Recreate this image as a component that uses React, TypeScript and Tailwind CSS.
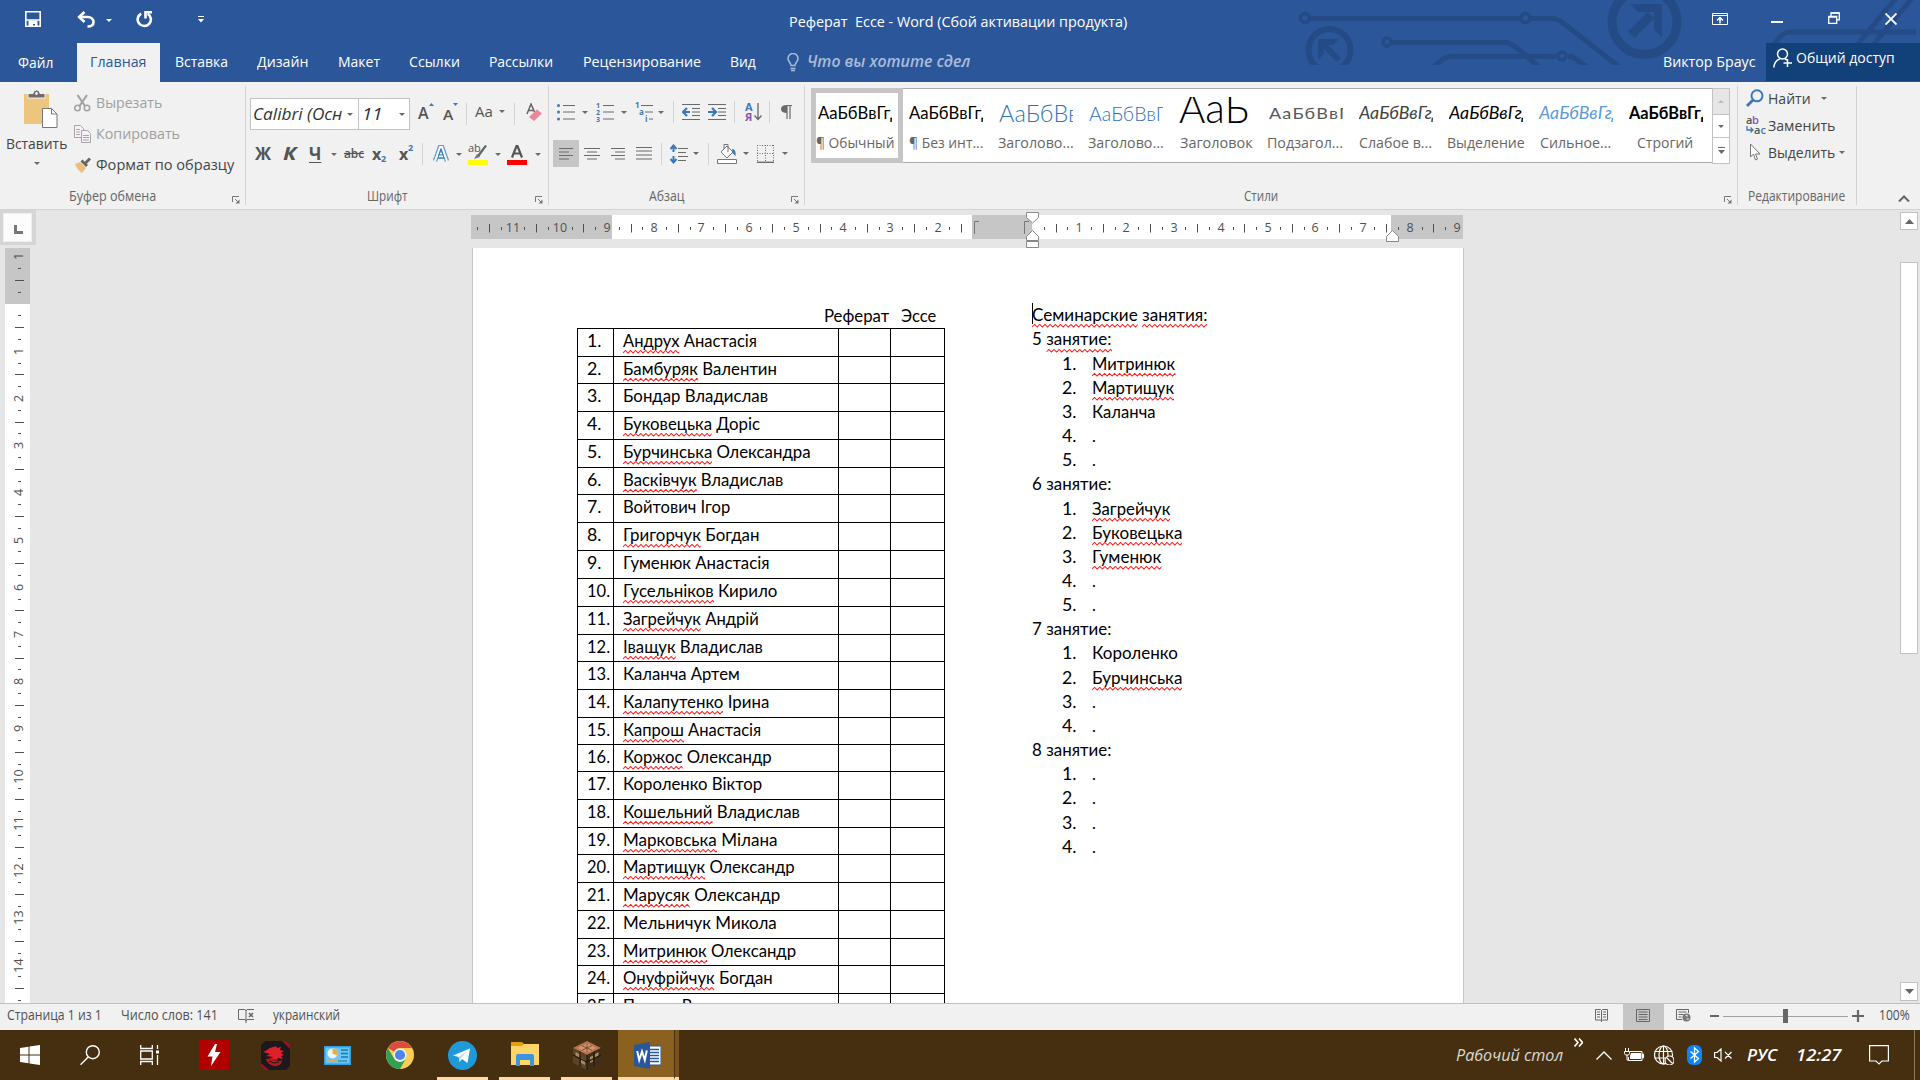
import React, { useLayoutEffect, useRef } from 'react';

/* Text condensed or widened to the width of its box. */
function T({ c = '', w, children }: { c?: string; w?: number; children: React.ReactNode }) {
  const outer = useRef<HTMLSpanElement>(null);
  const inner = useRef<HTMLSpanElement>(null);
  useLayoutEffect(() => {
    const o = outer.current!;
    const i = inner.current!;
    i.style.transform = `scaleX(${o.getBoundingClientRect().width / i.offsetWidth})`;
  }, []);
  return (
    <span ref={outer} className={`block shrink-0 whitespace-pre ${c}`} style={w ? { width: w } : undefined}>
      <span ref={inner} className="inline-block origin-left align-top">{children}</span>
    </span>
  );
}

const zig = 'M0 3' + Array.from({ length: 60 }, (_, i) => `l2.5 ${i % 2 ? 2.6 : -2.6}`).join('');
const Wavy = ({ children }: { children: React.ReactNode }) => (
  <span className="relative inline-block">
    {children}
    <svg className="absolute left-0 bottom-[-1px] h-[4px] w-full overflow-hidden" fill="none" stroke="#ff2020" strokeWidth="1">
      <path d={zig} />
    </svg>
  </span>
);

const Caret = ({ c = '' }: { c?: string }) => (
  <svg className={`h-[3px] w-[6px] shrink-0 ${c}`} viewBox="0 0 6 3"><path d="M0 0h6L3 3z" fill="#6a6a6a" /></svg>
);
const Sep = ({ c = '' }: { c?: string }) => <div className={`h-[22px] w-px shrink-0 bg-[#d2d2d2] ${c}`} />;
const GroupSep = () => <div className="mt-1 h-[119px] w-px shrink-0 bg-[#d2d2d2]" />;
const Launcher = ({ c = '' }: { c?: string }) => (
  <svg className={`h-[8px] w-[8px] shrink-0 ${c}`} viewBox="0 0 8 8" fill="none" stroke="#777">
    <path d="M.5 6V.5H7M3 3l3 3" /><path d="M7.5 3.5v4h-4z" fill="#777" stroke="none" />
  </svg>
);
const label = 'text-[14px] leading-[26px] text-[#666]';

function Header() {
  return (
    <header className="relative h-[82px] bg-[#2b579a] text-[15px] text-white">
      <svg className="absolute left-[1290px] top-0 h-[65px] w-[630px]" viewBox="1290 0 630 65" fill="none" stroke="#244b86" strokeWidth="5">
        <circle cx="1305" cy="18" r="4.5" strokeWidth="3.5" /><path d="M1311 18.5H1520M1531 18.5h20c7 0 10 3 14 6l55 43" />
        <circle cx="1525.500" cy="18" r="4.500" strokeWidth="3.5" />
        <circle cx="1329.500" cy="50" r="21" strokeWidth="6" /><path d="M1339 60l-17-17" strokeWidth="6" /><path d="M1318 60V39h21l-6 6h-9v9z" fill="#244b86" stroke="none" />
        <circle cx="1387" cy="42" r="4" strokeWidth="3.5" /><path d="M1392 42.500h112c5 0 8 2 11 4l26 22" />
        <path d="M1433 67c8-6 11-10.500 18-10.500H1556M1568 56.500h4l16 11" /><circle cx="1562" cy="56" r="4" strokeWidth="3.5" />
        <circle cx="1644.500" cy="22" r="32.500" strokeWidth="9" /><path d="M1631 35l20-20" strokeWidth="9" /><path d="M1630 4h32v33l-8-7V12h-16z" fill="#244b86" stroke="none" />
        <path d="M1773 45l8-9c3-3 5-4 9-4h126M1857 45L1896-2M1873 45L1914-4" />
      </svg>
      <div className="relative flex h-[43px] items-start">
        <svg className="ml-[25px] mt-[11px] h-[16px] w-[16px]" viewBox="0 0 16 16" fill="none" stroke="#fff" strokeWidth="1.6"><path d="M.8.8h14.400v14.400H.8z" /><path d="M1 9h14" strokeWidth="1.500" /><path d="M3.500 9.500h9V16H10v-3H8v3H3.500z" fill="#fff" stroke="none" /></svg>
        <svg className="ml-[36px] mt-[11px] h-[17px] w-[18px]" viewBox="0 0 18 17" fill="none" stroke="#fff" strokeWidth="2.6"><path d="M2 6h9c3 0 5.500 2 5.500 5s-2.500 4.500-6 4.500" /><path d="M7.500 1L2.200 6l5.300 5" /></svg>
        <svg className="ml-[11px] mt-[19px] h-[3px] w-[6px]" viewBox="0 0 6 3"><path d="M0 0h6L3 3z" fill="#fff" /></svg>
        <svg className="ml-[24px] mt-[10px] h-[18px] w-[17px]" viewBox="0 0 17 18" fill="none" stroke="#fff" strokeWidth="2.600"><path d="M5.200 3.600a6.600 6.600 0 1 0 6.500.2" /><path d="M9.500 8.500V2.300H16" /></svg>
        <svg className="ml-[45px] mt-[15px] h-[8px] w-[6px]" viewBox="0 0 6 8" fill="#fff"><path d="M0 1h6v1H0zM0 4h6L3 7.500z" /></svg>
        <T c="ml-[585px] w-[338px] leading-[42px]">{'Реферат  Ессе - Word (Сбой активации продукта)'}</T>
        <svg className="ml-[585px] mt-[13px] h-[12px] w-[16px]" viewBox="0 0 16 12" fill="none" stroke="#fff"><path d="M.5.500h15v11H.5zM.5 2.500h15" /><path d="M8 10.500V5M5 7.500l3-3 3 3" strokeWidth="1.500" /></svg>
        <div className="ml-[43px] mt-[21px] h-[2px] w-[12px] bg-white" />
        <svg className="ml-[45px] mt-[12px] h-[12px] w-[12px]" viewBox="0 0 12 12" fill="none" stroke="#fff" strokeWidth="1.300"><path d="M3 4V.8h8.300v7H9" /><path d="M.7 4.300h8v7h-8z" /><path d="M3 1h8M.7 5h8" /></svg>
        <svg className="ml-[45px] mt-[13px] h-[12px] w-[12px]" viewBox="0 0 12 12" stroke="#fff" strokeWidth="1.900"><path d="M.5.500l11 11M11.500.500l-11 11" /></svg>
      </div>
      <nav className="relative flex h-[39px] leading-[37px]">
        <T c="ml-[18px] w-[35px] leading-[39px]">Файл</T>
        <div className="ml-[24px] w-[83px] bg-[#f1f1f1] pl-[13px] text-[#2b579a]"><T c="w-[56px]">Главная</T></div>
        <T c="ml-[15px] w-[53px]">Вставка</T>
        <T c="ml-[29px] w-[51px]">Дизайн</T>
        <T c="ml-[30px] w-[42px]">Макет</T>
        <T c="ml-[29px] w-[51px]">Ссылки</T>
        <T c="ml-[29px] w-[64px]">Рассылки</T>
        <T c="ml-[30px] w-[118px]">Рецензирование</T>
        <T c="ml-[29px] w-[26px]">Вид</T>
        <svg className="ml-[31px] mt-[10px] h-[19px] w-[12px]" viewBox="0 0 12 19" fill="none" stroke="#a9bcd9" strokeWidth="1.500"><path d="M4 12.500c0-3-3-3.500-3-7a5 5 0 0 1 10 0c0 3.500-3 4-3 7zM3.500 15.500h5M4 17.500h4" /></svg>
        <T c="ml-[8px] w-[163px] text-[16px] italic font-semibold text-[#a9bcd9] leading-[36px]">Что вы хотите сдел</T>
        <T c="ml-[693px] w-[93px]">Виктор Браус</T>
        <div className="ml-[10px] flex h-[38px] w-[154px] bg-[#124078]">
          <svg className="ml-[7px] mt-[5px] h-[20px] w-[20px]" viewBox="0 0 20 20" fill="none" stroke="#fff" strokeWidth="1.500"><circle cx="9.500" cy="6" r="5" /><path d="M.8 19.500c.5-5 3-7.500 6-8.500M12 11l2 1M14.500 11v8M10.500 15h8.500" /></svg>
          <T c="ml-[3px] w-[99px] leading-[29px]">Общий доступ</T>
        </div>
      </nav>
    </header>
  );
}

function Clipboard() {
  return (
    <section className="flex w-[245px] shrink-0 flex-col">
      <div className="flex h-[101px]">
        <div className="flex w-[74px] flex-col">
          <svg className="ml-[23px] mt-[8px] h-[38px] w-[35px]" viewBox="0 0 35 38"><path d="M1 4h25v30H1z" fill="#ecc67e" rx="2" /><path d="M5 8V3.500h5a3.500 3.500 0 0 1 7 0h5V8z" fill="#6d6d6d" stroke="#f1f1f1" /><circle cx="13.500" cy="3.500" r="1.400" fill="#f1f1f1" /><path d="M19.500 18.500h9l5.500 5.500v13.500H19.500z" fill="#fff" stroke="#777" /><path d="M28.500 18.500V24H34" fill="none" stroke="#777" /></svg>
          <T c="ml-[6px] mt-[3px] w-[61px] text-[15px] leading-[25px] text-[#444]">Вставить</T>
          <Caret c="ml-[34px] mt-[6px]" />
        </div>
        <div className="flex flex-col pt-[5px] text-[15px] leading-[31px]">
          <div className="flex h-[31px] items-center text-[#a0a0a0]">
            <svg className="h-[18px] w-[17px]" viewBox="0 0 17 18" fill="none" stroke="#a3a3a3" strokeWidth="1.600"><circle cx="3.500" cy="14" r="2.700" /><circle cx="13" cy="14" r="2.700" /><path d="M3.500 1l7.500 11M13 1L5.500 12" strokeWidth="2.200" /></svg>
            <T c="ml-[5px] w-[66px]">Вырезать</T>
          </div>
          <div className="flex h-[31px] items-center text-[#a0a0a0]">
            <svg className="h-[18px] w-[17px]" viewBox="0 0 17 18" fill="#f7f2f7" stroke="#aaa3aa"><path d="M.5.500h6l3 3v9h-9z" /><path d="M7.500 5.500h6l3 3v9h-9z" /><path d="M2 4.500h4M2 7h4M2 9.500h4M9 10.500h6M9 12.500h6M9 15h6" /></svg>
            <T c="ml-[5px] w-[84px]">Копировать</T>
          </div>
          <div className="flex h-[31px] items-center text-[#444]">
            <svg className="h-[16px] w-[17px]" viewBox="0 0 17 16"><path d="M1 7l5-2 6 6-4 5c-3-2-5-4-7-9z" fill="#ecc07a" /><path d="M6.500 4.500l2-2L14 8l-2 2z" fill="#666" /><path d="M10.500 5L15 .5 17 2.500 12.500 7z" fill="#666" /></svg>
            <T c="ml-[5px] w-[138px]">Формат по образцу</T>
          </div>
        </div>
      </div>
      <div className="flex h-[26px]"><T c={'ml-[69px] w-[87px] ' + label}>Буфер обмена</T><Launcher c="ml-[76px] mt-[13px]" /></div>
    </section>
  );
}

function FontGroup() {
  return (
    <section className="flex w-[302px] shrink-0 flex-col pt-[16px] text-[#555]">
      <div className="flex h-[32px] items-center">
        <div className="ml-[4px] flex h-[32px] w-[109px] items-center border border-[#c2c2c2] bg-white">
          <T c="ml-[2px] w-[89px] text-[17px] italic font-medium text-[#333]">Calibri (Осн</T><Caret c="ml-[5px]" />
        </div>
        <div className="ml-[-1px] flex h-[32px] w-[52px] items-center border border-[#c2c2c2] bg-white">
          <T c="ml-[3px] w-[21px] text-[17px] italic font-medium text-[#333]">11</T><Caret c="ml-[16px]" />
        </div>
        <T c="ml-[8px] w-[11px] text-[16px] font-semibold leading-[28px] mb-[3px]">A</T>
        <svg className="mb-[20px] h-[3px] w-[5px]" viewBox="0 0 5 3"><path d="M0 3h5L2.500 0z" fill="#3a78b9" /></svg>
        <T c="ml-[9px] w-[10px] text-[14px] font-semibold">A</T>
        <svg className="mb-[20px] h-[3px] w-[5px]" viewBox="0 0 5 3"><path d="M0 0h5L2.500 3z" fill="#3a78b9" /></svg>
        <Sep c="ml-[8px]" />
        <T c="ml-[8px] w-[18px] text-[15px] mb-[5px]">Aa</T><Caret c="ml-[6px] mb-[6px]" />
        <Sep c="ml-[9px]" />
        <svg className="ml-[11px] mb-[4px] h-[18px] w-[16px]" viewBox="0 0 16 18"><path d="M1 11L5 1l4 9M2.500 7.500h5" fill="none" stroke="#666" strokeWidth="1.500" /><path d="M3 14l8-7.500 5 4-8 7.500z" fill="#e8889a" /></svg>
      </div>
      <div className="mt-[9px] flex h-[30px] items-center text-[17px] font-bold">
        <T c="ml-[9px] w-[16px]">Ж</T>
        <T c="ml-[12px] w-[13px] italic">К</T>
        <T c="ml-[13px] w-[12px]"><u className="underline-offset-2">Ч</u></T>
        <Caret c="ml-[10px]" />
        <T c="ml-[7px] w-[20px] text-[13px] font-semibold"><s>abc</s></T>
        <T c="ml-[8px] w-[9px] text-[16px]">x</T><span className="mt-[10px] w-[6px] text-[9px] text-[#3a78b9]">2</span>
        <T c="ml-[12px] w-[9px] text-[16px]">x</T><span className="mb-[12px] w-[6px] text-[9px] text-[#3a78b9]">2</span>
        <Sep c="ml-[8px]" />
        <svg className="ml-[10px] h-[18px] w-[16px]" viewBox="0 0 16 18" fill="none"><path d="M2 16L7 2h2l5 14M4.500 11.500h7" stroke="#5b9bd5" strokeWidth="4.500" /><path d="M2 16L7 2h2l5 14M4.500 11.500h7" stroke="#fff" strokeWidth="2" /><path d="M8 4l3 9H5z" stroke="#3a78b9" /></svg>
        <Caret c="ml-[7px]" />
        <svg className="ml-[6px] h-[22px] w-[20px]" viewBox="0 0 20 22"><text x="0" y="9" fontSize="11" fontWeight="500" fill="#555">ab</text><path d="M19 3l-8 11-2-1.500L17 2z" fill="#666" /><path d="M9 11l3 3-6 2z" fill="#777" /><path d="M0 17h20v5H0z" fill="#ff0" /></svg>
        <Caret c="ml-[7px]" />
        <svg className="ml-[6px] h-[22px] w-[20px]" viewBox="0 0 20 22"><path d="M5 14.500L9.500 3h1L15 14.500M6.500 10.500h7" fill="none" stroke="#555" strokeWidth="2.200" /><path d="M0 17h20v5H0z" fill="red" /></svg>
        <Caret c="ml-[8px]" />
      </div>
      <div className="mt-auto flex h-[26px] font-normal"><T c={'ml-[121px] w-[41px] ' + label}>Шрифт</T><Launcher c="ml-[127px] mt-[13px]" /></div>
    </section>
  );
}

const Lines = ({ d, c, w = 16 }: { d: string; c: string; w?: number }) => (
  <svg className={`h-[18px] shrink-0 ${c}`} viewBox={`0 0 ${w} 18`} fill="none" stroke="#6a6a6a" strokeWidth="1.200"><path d={d} /></svg>
);

function Paragraph() {
  return (
    <section className="flex w-[255px] shrink-0 flex-col pt-[16px]">
      <div className="flex h-[28px] items-center">
        <svg className="ml-[8px] h-[18px] w-[18px]" viewBox="0 0 18 18"><path d="M6 2.500h12M6 9h12M6 16h12" stroke="#6a6a6a" strokeWidth="1.200" /><g fill="#3a78b9"><circle cx="1.500" cy="2.500" r="1.500" /><circle cx="1.500" cy="9" r="1.500" /><circle cx="1.500" cy="16" r="1.500" /></g></svg>
        <Caret c="ml-[7px]" />
        <svg className="ml-[8px] h-[20px] w-[18px]" viewBox="0 0 18 20"><path d="M7 3.500h11M7 10h11M7 17h11" stroke="#6a6a6a" strokeWidth="1.200" /><g fill="#3a78b9" fontSize="7" fontWeight="700"><text x="0" y="6">1</text><text x="0" y="13">2</text><text x="0" y="20">3</text></g></svg>
        <Caret c="ml-[7px]" />
        <svg className="ml-[8px] h-[20px] w-[18px]" viewBox="0 0 18 20"><path d="M6 3.500h12M10 10h8M14 17h4" stroke="#6a6a6a" strokeWidth="1.200" /><g fill="#3a78b9" fontSize="8" fontWeight="700"><text x="0" y="6">1</text><text x="4" y="13">a</text><text x="10" y="20">i</text></g></svg>
        <Caret c="ml-[5px]" />
        <Sep c="ml-[9px]" />
        <svg className="ml-[8px] h-[18px] w-[18px]" viewBox="0 0 18 18" fill="none" stroke="#6a6a6a"><path d="M0 1.500h18M10 5.500h8M10 9h8M10 12.500h8M0 16.500h18" /><path d="M8 9H1.500M5 5L1 9l4 4" stroke="#3a78b9" strokeWidth="2.200" /></svg>
        <svg className="ml-[8px] h-[18px] w-[18px]" viewBox="0 0 18 18" fill="none" stroke="#6a6a6a"><path d="M0 1.500h18M10 5.500h8M10 9h8M10 12.500h8M0 16.500h18" /><path d="M0 9h7M4 5l4 4-4 4" stroke="#3a78b9" strokeWidth="2.200" /></svg>
        <Sep c="ml-[8px]" />
        <svg className="ml-[10px] h-[20px] w-[17px]" viewBox="0 0 17 20"><g fontSize="11" fontWeight="700"><text x="0" y="9" fill="#3a78b9">А</text><text x="0" y="19" fill="#8e4fb0">Я</text></g><path d="M13 1v16M9.500 13.500l3.500 4 3.500-4" fill="none" stroke="#666" strokeWidth="1.300" /></svg>
        <Sep c="ml-[7px]" />
        <svg className="ml-[11px] h-[15px] w-[11px]" viewBox="0 0 11 15"><path d="M5 .500h6M6 .500V14M9 .500V14" stroke="#6a6a6a" strokeWidth="1.200" /><path d="M6 0v8C2 8 0 6.500 0 4s2-4 6-4z" fill="#6a6a6a" /></svg>
      </div>
      <div className="mt-[14px] flex h-[27px] items-center">
        <div className="ml-[4px] flex h-[27px] w-[26px] items-center bg-[#c6c6c6]"><Lines c="ml-[6px] w-[14px]" w={14} d="M0 3.500h14M0 7h10M0 10.500h14M0 14h10" /></div>
        <Lines c="ml-[5px] w-[16px]" d="M0 3.500h16M3 7h10M0 10.500h16M3 14h10" />
        <Lines c="ml-[11px] w-[14px]" w={14} d="M0 3.500h14M4 7h10M0 10.500h14M4 14h10" />
        <Lines c="ml-[11px] w-[16px]" d="M0 2.500h16M0 6h16M0 10h16M0 14h16" />
        <Sep c="ml-[9px]" />
        <svg className="ml-[8px] h-[20px] w-[18px]" viewBox="0 0 18 20" fill="none" stroke="#6a6a6a"><path d="M8 4.500h10M8 8.500h8M8 12.500h10M8 16.500h8" strokeWidth="1.200" /><path d="M3.500 2v6M.5 5l3-3.500 3 3.500M3.500 12v6M.5 15l3 3.500 3-3.500" stroke="#3a78b9" strokeWidth="2" /></svg>
        <Caret c="ml-[5px]" />
        <Sep c="ml-[9px]" />
        <svg className="ml-[8px] h-[21px] w-[20px]" viewBox="0 0 20 21" fill="#fff" stroke="#777"><path d="M10 3l6 6-6 6-6-6z" /><path d="M7 6V1.500h4V9" fill="none" /><path d="M15 6c3 0 4 3 3.500 7l-3-3z" fill="#3a78b9" stroke="none" /><path d="M.5 16.500h19v4H.5z" /></svg>
        <Caret c="ml-[6px]" />
        <svg className="ml-[8px] h-[18px] w-[17px]" viewBox="0 0 17 18" fill="none" stroke="#6a6a6a"><path d="M.5 0v17M16.500 0v17M8.500 0v17M0 .500h17M0 8.500h17" strokeDasharray="1 1.500" /><path d="M0 17.300h17" strokeWidth="1.400" /></svg>
        <Caret c="ml-[8px]" />
      </div>
      <div className="mt-auto flex h-[26px]"><T c={'ml-[100px] w-[36px] ' + label}>Абзац</T><Launcher c="ml-[106px] mt-[13px]" /></div>
    </section>
  );
}

const styles: [string, string, string, string][] = [
  ['АаБбВвГгД', 'w-[86px] text-[16.5px] text-black', '¶ Обычный', 'ml-[1px] w-[78px]'],
  ['АаБбВвГгД', 'w-[86px] text-[16.5px] text-black', '¶ Без инт...', 'ml-[4px] w-[74px]'],
  ['АаБбВвГ', 'w-[93px] text-[24px] font-light text-[#2e74b5]', 'Заголово...', 'ml-[3px] w-[76px]'],
  ['АаБбВвГ', 'w-[77px] text-[20px] font-light text-[#2e74b5]', 'Заголово...', 'ml-[3px] w-[76px]'],
  ['АаБ', 'mt-[-6px] w-[70px] text-[42px] font-light text-black', 'Заголовок', 'ml-[5px] w-[73px]'],
  ['АаБбВвГг', 'w-[87px] text-[16px] tracking-[1px] text-[#5a5a5a]', 'Подзагол...', 'ml-[2px] w-[76px]'],
  ['АаБбВвГгД', 'w-[86px] text-[16.5px] italic text-[#404040]', 'Слабое в...', 'ml-[4px] w-[73px]'],
  ['АаБбВвГгД', 'w-[86px] text-[16.5px] italic text-black', 'Выделение', 'ml-[2px] w-[78px]'],
  ['АаБбВвГгД', 'w-[86px] text-[16.5px] italic text-[#5b9bd5]', 'Сильное...', 'ml-[5px] w-[71px]'],
  ['АаБбВвГгД', 'w-[85px] text-[16.5px] font-bold text-black', 'Строгий', 'ml-[12px] w-[56px]'],
];

function Styles() {
  return (
    <section className="flex w-[932px] shrink-0 flex-col pt-[6px]">
      <div className="ml-[6px] flex h-[76px] w-[919px]">
        <div className="flex h-[75px] w-[901px] border-y border-l border-[#ababab] bg-white">
          {styles.map(([s, sc, n, nc], i) => (
            <div key={i} className={`relative w-[90px] shrink-0 pt-[8px] ${i === 0 ? 'outline-[5px] -outline-offset-4 outline-[#c5c5c5]' : ''}`}>
              <div className={`h-[32px] w-[74px] overflow-hidden font-[Lato,sans-serif] leading-[32px] ${i === 0 ? 'ml-[6px]' : 'ml-[7px]'}`}><T c={sc}>{s}</T></div>
              <div className="mt-[3px] pl-[3px] text-[15px] leading-[21px] text-[#666]"><T c={nc}>{n}</T></div>
            </div>
          ))}
        </div>
        <div className="flex w-[18px] flex-col border border-[#c2c2c2] bg-white">
          <div className="flex h-[26px] items-center justify-center border-b border-[#c2c2c2] bg-[#e6e6e6]"><svg className="h-[3px] w-[6px]" viewBox="0 0 6 3"><path d="M0 3h6L3 0z" fill="#bbb" /></svg></div>
          <div className="flex h-[23px] items-center justify-center border-b border-[#c2c2c2]"><Caret /></div>
          <div className="flex flex-1 items-center justify-center"><svg className="h-[8px] w-[7px]" viewBox="0 0 7 8" fill="#6a6a6a"><path d="M0 0h7v1H0zM0 3h7L3.500 7z" /></svg></div>
        </div>
      </div>
      <div className="mt-auto flex h-[26px]"><T c={'ml-[439px] w-[34px] ' + label}>Стили</T><Launcher c="ml-[446px] mt-[13px]" /></div>
    </section>
  );
}

function Editing() {
  return (
    <section className="flex w-[118px] shrink-0 flex-col pt-[2px] text-[15px] text-[#444]">
      <div className="flex h-[28px] items-center">
        <svg className="ml-[8px] h-[18px] w-[18px]" viewBox="0 0 18 18" fill="none" stroke="#3a78b9"><circle cx="11" cy="6.800" r="5.500" strokeWidth="2" /><path d="M7 11l-6 6" strokeWidth="2.800" /></svg>
        <T c="ml-[4px] w-[43px]">Найти</T><Caret c="ml-[10px]" />
      </div>
      <div className="flex h-[27px] items-center">
        <svg className="ml-[8px] h-[19px] w-[20px]" viewBox="0 0 20 19"><g fontSize="11" fontWeight="600"><text x="0" y="8" fill="#555">a</text><text x="6" y="8" fill="#8e4fb0">b</text><text x="8" y="18" fill="#555">a</text><text x="14.500" y="18" fill="#3a78b9">c</text></g><path d="M1 10v4h6M4.500 11.500L7 14l-2.500 2.500" fill="none" stroke="#3a78b9" strokeWidth="1.300" /></svg>
        <T c="ml-[2px] w-[67px]">Заменить</T>
      </div>
      <div className="flex h-[26px] items-center">
        <svg className="ml-[12px] h-[18px] w-[11px]" viewBox="0 0 11 18" fill="#fff" stroke="#777"><path d="M.5 1v13l3-3 2 6 2-1-2-5h4.500z" /></svg>
        <T c="ml-[7px] w-[67px]">Выделить</T><Caret c="ml-[4px]" />
      </div>
      <div className="mt-auto h-[26px]"><T c={'ml-[10px] w-[97px] ' + label}>Редактирование</T></div>
    </section>
  );
}

/* Ruler scale: numbers at every unit, bars at halves, dots at quarters. */
const unit = 47.22;
const hTicks = Array.from({ length: 87 }, (_, k) => k - 47).filter((k) => {
  const x = 1032 + (k * unit) / 4;
  return x > 474 && x < 1462 && !(x > 970 && x < 1040);
});
function HRuler() {
  return (
    <svg className="ml-[435px] h-[38px] w-[993px] shrink-0 overflow-visible" viewBox="471 210 993 38">
      <path d="M471 215h992v24H471z" fill="#fff" />
      <path d="M471 215h141v24H471zM972 215h60v24h-60zM1391 215h72v24h-72z" fill="#c6c6c6" />
      {hTicks.map((k) => {
        const x = Math.round(1032 + (k * unit) / 4);
        if (k % 4 === 0) return <text key={k} x={x} y="232" fontSize="12.500" fontWeight="500" textAnchor="middle" fill="#505050">{Math.abs(k / 4)}</text>;
        return <rect key={k} x={x} y={k % 2 === 0 ? 224 : 227} width="1" height={k % 2 === 0 ? 8.5 : 3} fill="#505050" />;
      })}
      <path d="M974.500 234v-12.500h4.500M1024.500 234v-12.500h4.500" fill="none" stroke="#777" />
      <g fill="#fff" stroke="#888">
        <path d="M1026.500 212.500h12v5l-6 5.500-6-5.500zM1026.500 240.500v-4l6-6 6 6v4zM1026.500 241.500h12v6h-12z" />
        <path d="M1386.500 241.500v-5l6-6 6 6v5z" />
      </g>
    </svg>
  );
}
const vTicks = Array.from({ length: 64 }, (_, i) => i - 4).filter((k) => k !== 0);
function VRuler() {
  return (
    <svg className="ml-[5px] mt-[3px] h-[755px] w-[25px] shrink-0" viewBox="5 248 25 755">
      <path d="M5 248h25v755H5z" fill="#fff" /><path d="M5 248h25v56H5z" fill="#c6c6c6" />
      {vTicks.map((k) => {
        const y = Math.round(303.5 + (k * unit) / 4);
        if (k % 4 === 0) return <text key={k} transform={`translate(23 ${y + 0.5}) rotate(-90)`} fontSize="12.500" fontWeight="500" textAnchor="middle" fill="#505050">{Math.abs(k / 4)}</text>;
        return <rect key={k} x={k % 2 === 0 ? 15 : 18} y={y} width={k % 2 === 0 ? 9 : 3} height="1" fill="#505050" />;
      })}
    </svg>
  );
}

const people: [string, string, number, boolean, number][] = [
  ['Андрух', 'Анастасія', 133.5, true, 28], ['Бамбуряк', 'Валентин', 153.5, true, 27], ['Бондар', 'Владислав', 144.500, false, 28],
  ['Буковецька', 'Доріс', 137.5, true, 28], ['Бурчинська', 'Олександра', 188, true, 28], ['Васківчук', 'Владислав', 160.5, true, 27],
  ['Войтович', 'Ігор', 107.5, false, 28], ['Григорчук', 'Богдан', 137, true, 28], ['Гуменюк', 'Анастасія', 146.5, false, 28],
  ['Гусельніков', 'Кирило', 154.5, true, 28], ['Загрейчук', 'Андрій', 136, true, 28], ['Іващук', 'Владислав', 140, true, 27],
  ['Каланча', 'Артем', 117, false, 28], ['Калапутенко', 'Ірина', 146, true, 28], ['Капрош', 'Анастасія', 138.5, true, 27],
  ['Коржос', 'Олександр', 149, true, 27], ['Короленко', 'Віктор', 139, false, 28], ['Кошельний', 'Владислав', 177, true, 28],
  ['Марковська', 'Мілана', 155, true, 27], ['Мартищук', 'Олександр', 171.5, true, 28], ['Марусяк', 'Олександр', 157, true, 28],
  ['Мельничук', 'Микола', 154, false, 28], ['Митринюк', 'Олександр', 173.5, true, 27], ['Онуфрійчук', 'Богдан', 150, true, 28],
  ['Панчук', 'Василь', 112, false, 28],
];

const lessons: [string, boolean, [string, number, boolean][]][] = [
  ['5', true, [['Митринюк', 83.5, true], ['Мартищук', 82, true], ['Каланча', 63.5, false], ['.', 0, false], ['.', 0, false]]],
  ['6', false, [['Загрейчук', 78, true], ['Буковецька', 90, true], ['Гуменюк', 69.5, true], ['.', 0, false], ['.', 0, false]]],
  ['7', false, [['Короленко', 85.5, false], ['Бурчинська', 90, true], ['.', 0, false], ['.', 0, false]]],
  ['8', false, [['.', 0, false], ['.', 0, false], ['.', 0, false], ['.', 0, false]]],
];

function Page() {
  return (
    <main className="ml-[436px] flex h-[755px] w-[992px] overflow-hidden border-x border-[#c6c6c6] bg-white font-[Lato,sans-serif] text-[16.5px] text-black">
      <div className="ml-[104px] w-[368px] shrink-0 pt-[54px]">
        <div className="flex h-[26px] leading-[28px]"><T c="ml-[247px] w-[65px]">Реферат</T><T c="ml-[12px] w-[35px]">Эссе</T></div>
        {people.map(([a, b, w, bad, h], i) => (
          <div key={i} className="flex border-t border-black leading-[24px]" style={{ height: h }}>
            <div className="w-[37px] shrink-0 border-x border-black pl-[9px]"><T w={i < 9 ? 14 : 23}>{i + 1}.</T></div>
            <div className="w-[225px] shrink-0 border-r border-black pl-[9px]"><T w={w}>{bad ? <Wavy>{a}</Wavy> : a}{' ' + b}</T></div>
            <div className="w-[52px] shrink-0 border-r border-black" />
            <div className="w-[54px] shrink-0 border-r border-black" />
          </div>
        ))}
      </div>
      <div className="ml-[87px] pt-[55.3px] leading-[24.15px]">
        <div className="relative">
          <div className="absolute left-0 top-0 h-[21px] w-px bg-black" />
          <T c="w-[175px]"><Wavy>Семинарские</Wavy> <Wavy>занятия:</Wavy></T>
        </div>
        {lessons.map(([n, bad, items]) => (
          <div key={n}>
            <T c="w-[80px]">{n + ' '}{bad ? <Wavy>занятие:</Wavy> : 'занятие:'}</T>
            {items.map(([t, w, wrong], i) => (
              <div key={i} className="flex pl-[30px]">
                <T c="mr-[16px] w-[14px]">{i + 1}.</T>
                {w ? <T w={w}>{wrong ? <Wavy>{t}</Wavy> : t}</T> : <span>{t}</span>}
              </div>
            ))}
          </div>
        ))}
      </div>
    </main>
  );
}

function StatusBar() {
  return (
    <div className="flex h-[27px] items-center border-t border-[#c0c0c0] bg-[#f1f1f1] text-[14px] text-[#505050]">
      <T c="ml-[7px] w-[95px] -mt-[6px]">Страница 1 из 1</T>
      <T c="ml-[19px] w-[97px] -mt-[6px]">Число слов: 141</T>
      <svg className="ml-[20px] -mt-[2px] h-[14px] w-[17px]" viewBox="0 0 17 14" fill="none" stroke="#666"><path d="M8 12l-1-1.500H.5v-10H7L8 2l1-1.500h7M8 2v12M8 12l1-1.500h7" /><path d="M11 4l4 4M15 4l-4 4" strokeWidth="1.600" /></svg>
      <T c="ml-[18px] w-[67px] -mt-[6px]">украинский</T>
      <svg className="ml-[1255px] -mt-[3px] h-[13px] w-[13px]" viewBox="0 0 13 13" fill="none" stroke="#666"><path d="M6.500 13V1.500l-1-1H.5v10.500h5l1 1 1-1h5V.500h-5l-1 1M2 3h3M2 5.500h3M2 8h3M8 3h3M8 5.500h3M8 8h3" /></svg>
      <div className="ml-[15px] flex h-[26px] w-[41px] items-center bg-[#c6c6c6]"><svg className="-mt-[3px] ml-[13px] h-[13px] w-[14px]" viewBox="0 0 14 13" fill="none" stroke="#666"><path d="M.5.500h13v12H.5zM2.500 3h9M2.500 5.500h9M2.500 8h9M2.500 10.500h9" /></svg></div>
      <svg className="ml-[12px] -mt-[3px] h-[13px] w-[15px]" viewBox="0 0 15 13" fill="none" stroke="#666"><path d="M6 10.500H.5V.500h12V4M2.500 3h8M2.500 5.500h5M2.500 8h3" /><circle cx="10.500" cy="8.500" r="4" fill="#777" stroke="none" /><path d="M9 7l2-1.500 1 2zM10 10l2.500-1v2z" fill="#f1f1f1" stroke="none" /></svg>
      <div className="ml-[19px] -mt-[2px] h-[2px] w-[9px] bg-[#666]" />
      <div className="ml-[4px] -mt-[2px] flex h-[14px] w-[125px] items-center">
        <div className="h-px w-[60px] bg-[#a0a0a0]" /><div className="h-[14px] w-[5px] bg-[#666]" /><div className="h-px flex-1 bg-[#a0a0a0]" />
      </div>
      <svg className="ml-[4px] -mt-[2px] h-[12px] w-[12px]" viewBox="0 0 12 12" stroke="#666" strokeWidth="2.200"><path d="M0 6h12M6 0v12" /></svg>
      <T c="ml-[15px] w-[31px] -mt-[6px]">100%</T>
    </div>
  );
}

function Taskbar() {
  return (
    <footer className="flex h-[50px] items-center bg-[#452f10] text-white">
      <svg className="ml-[20px] h-[20px] w-[20px]" viewBox="0 0 20 20" fill="#fff"><path d="M0 3l8.500-1.200v7.700H0zM9.500 1.600L20 0v9.500H9.500zM0 10.500h8.500v7.800L0 17zM9.500 10.500H20V20L9.500 18.400z" /></svg>
      <svg className="ml-[40px] h-[20px] w-[20px]" viewBox="0 0 20 20" fill="none" stroke="#fff" strokeWidth="1.400"><circle cx="12.800" cy="7.200" r="6.500" /><path d="M8.200 12L.5 19.700" /></svg>
      <svg className="ml-[40px] h-[20px] w-[20px]" viewBox="0 0 20 20" fill="none" stroke="#fff" strokeWidth="1.300"><path d="M.7 0v3.500h11.600V0M.7 20v-3.500h11.600V20M.7 6h11.600v8H.7zM17.500 0v4M17.500 10v10" /><path d="M16 5.500h3v3h-3z" fill="#fff" stroke="none" /></svg>
      <svg className="ml-[39px] h-[30px] w-[30px]" viewBox="0 0 30 30"><path d="M0 0h30v30H0z" fill="#b00000" /><path d="M16 4L8.500 16.500h5L12 26l9.500-14H16l2-8z" fill="#fff" /></svg>
      <svg className="ml-[32px] h-[29px] w-[29px]" viewBox="0 0 29 29"><path d="M20 0h5l4 4v6zM0 20v5l4 4h5z" fill="#a01020" /><path d="M4 0h17l8 8v17l-4 4H8l-8-7V4z" fill="#1b191b" /><path d="M2 11c4-1 6-5 11-5l2-1 1 2 4-1-1 3 4 1-3 2 3 2-3 1 2 3-5-1-1 2c-3-1-5 0-8-1l4-2-7-1 4-2z" fill="#e02028" /><path d="M5 18c4-1 5 1 8 1s6 2 8 0c0 4-3 6-7 6s-8-3-9-7z" fill="#b51a20" /><path d="M8 20l5 2 5-1" stroke="#1b191b" fill="none" /></svg>
      <svg className="ml-[34px] h-[19px] w-[27px]" viewBox="0 0 27 19"><path d="M0 0h27v19H0z" fill="#2f9fe0" /><path d="M1.500 1.500h24v16h-24z" fill="#6cc5f2" /><circle cx="8.500" cy="7.500" r="5" fill="#e8f6ff" /><path d="M8.500 7.500V2.500a5 5 0 0 1 4.600 7z" fill="#f2a93b" /><path d="M17 4h7M17 7.500h7M17 11h7" stroke="#1878b8" strokeWidth="1.500" /><path d="M4 15h9" stroke="#f2a93b" strokeWidth="1.500" /><path d="M14 15h9" stroke="#1878b8" /></svg>
      <svg className="ml-[35px] h-[28px] w-[28px]" viewBox="0 0 28 28"><circle cx="14" cy="14" r="14" fill="#fc5" /><path d="M1.900 7A14 14 0 0 1 26.100 7H14a7 7 0 0 0-6 3.500z" fill="#dd4b3e" /><path d="M1.900 7A14 14 0 0 0 14 28l6-10.500a7 7 0 0 1-12 0z" fill="#2da05a" /><circle cx="14" cy="14" r="6.500" fill="#f5f5f5" /><circle cx="14" cy="14" r="5.100" fill="#4a86ee" /></svg>
      <div className="ml-[23px] flex h-[50px] w-[51px] items-center justify-center border-b-[3px] border-[#ffd9a8]"><svg className="mt-[3px] h-[29px] w-[29px]" viewBox="0 0 29 29"><circle cx="14.500" cy="14.500" r="14.500" fill="#2099d8" /><path d="M5 14.500L22 7.500 19.500 22l-5.500-4-2.500 3-.8-5z" fill="#fff" /><path d="M10.700 16L19 10l-6.500 7.500-1 3.500z" fill="#bcd8ea" /></svg></div>
      <div className="ml-[11px] flex h-[50px] w-[51px] items-center justify-center border-b-[3px] border-[#ffd9a8]"><svg className="mt-[1px] h-[24px] w-[28px]" viewBox="0 0 28 24"><path d="M0 0h11l2 2v4H0z" fill="#e0a010" /><path d="M0 4h11l2-2h15v21H0z" fill="#fdd667" /><path d="M5 24V14a2 2 0 0 1 2-2h14a2 2 0 0 1 2 2v10h-4v-6H9v6z" fill="#3d93dc" /></svg></div>
      <div className="ml-[11px] flex h-[50px] w-[51px] items-center justify-center border-b-[3px] border-[#ffd9a8]"><svg className="mt-[3px] h-[29px] w-[28px]" viewBox="0 0 28 29"><path d="M14 0l14 7-14 7L0 7z" fill="#b8754f" /><path d="M14 2.500l9 4.500-9 4.500L5 7z" fill="#d59a70" /><path d="M14 2.500v9M9 4.700l10 4.600M19 4.700L9 9.300" stroke="#7a4a30" /><path d="M0 7l14 7v15L0 22z" fill="#5b4328" /><path d="M28 7l-14 7v15l14-7z" fill="#3f2e1b" /><path d="M2.500 11l4 2v4l-4-2zM8 17l4 2v5l-4-2zM17 16l3-1.500v6L17 22zM22 13l3.500-2v4L22 17z" fill="#a98a58" /><path d="M14 14v15M0 14l14 7 14-7M7 10.500v15M21 10.500v15" stroke="#241a10" strokeWidth="1.200" fill="none" /></svg></div>
      <div className="ml-[6px] flex h-[50px] w-[56px] items-center justify-center border-b-[3px] border-[#ffd9a8] bg-[#8b6120]"><svg className="mt-[3px] ml-[3px] h-[27px] w-[27px]" viewBox="0 0 27 27"><path d="M14 4h13v19H14z" fill="#fff" stroke="#2b579a" /><path d="M16 7.500h9M16 10.500h9M16 13.500h9M16 16.500h9M16 19.500h9" stroke="#2b579a" strokeWidth="1.400" /><path d="M0 3l16-3v27L0 24z" fill="#2b579a" /><path d="M3.200 9l2 9 2.800-8.500L10.800 18l2-9.500" fill="none" stroke="#fff" strokeWidth="2" /></svg></div>
      <div className="h-[50px] w-[5px] border-b-[3px] border-l border-b-[#ffd9a8] border-l-[#4a3310] bg-[#76531f]" />
      <T c="ml-[777px] w-[107px] text-[16px] italic font-medium text-[#dcd8d0]">Рабочий стол</T>
      <svg className="ml-[11px] mb-[26px] h-[9px] w-[9px]" viewBox="0 0 9 9" fill="none" stroke="#fff" strokeWidth="1.600"><path d="M.5.500l3.500 4-3.500 4M5 .500l3.500 4-3.500 4" /></svg>
      <svg className="ml-[13px] h-[9px] w-[16px]" viewBox="0 0 16 9" fill="none" stroke="#fff" strokeWidth="1.300"><path d="M.5 8.500L8 1l7.500 7.500" /></svg>
      <svg className="ml-[12px] h-[14px] w-[20px]" viewBox="0 0 20 14" fill="none" stroke="#fff"><path d="M6 3.500h12v9H4.500V9" /><path d="M7 5h10v6H6V8z" fill="#fff" stroke="none" /><path d="M18.500 6h1v4h-1zM1.500 0v3M4.500 0v3M.5 3.500h5v2l-1 1.500h-3L.5 5.500zM3 7v5h2" /></svg>
      <svg className="ml-[10px] h-[20px] w-[20px]" viewBox="0 0 20 20" fill="none" stroke="#fff" strokeWidth="1.200"><circle cx="9.500" cy="10" r="9" /><ellipse cx="9.500" cy="10" rx="4.500" ry="9" /><path d="M.5 6.500h18M.5 13h18M9.500 1v18" /><circle cx="15.500" cy="15.500" r="4.500" fill="#452f10" /><path d="M12.500 12.500l6 6" /></svg>
      <svg className="ml-[13px] h-[20px] w-[15px]" viewBox="0 0 15 20" fill="none" stroke="#fff" strokeWidth="1.300"><rect width="15" height="20" rx="6" fill="#0a84ff" stroke="none" /><path d="M3.500 6.500l8 7-4 3.500V3l4 3.500-8 7" /></svg>
      <svg className="ml-[12px] h-[14px] w-[18px]" viewBox="0 0 18 14" fill="none" stroke="#fff" strokeWidth="1.200"><path d="M.6 4.500h2.500L7 1v12L3.100 9.500H.6zM11 4l6.500 6.500M17.500 4L11 10.500" /></svg>
      <T c="ml-[15px] w-[30px] text-[16px] italic font-semibold">РУС</T>
      <T c="ml-[19px] w-[46px] text-[16px] italic font-semibold">12:27</T>
      <svg className="ml-[27px] h-[20px] w-[20px]" viewBox="0 0 20 20" fill="none" stroke="#fff" strokeWidth="1.200"><path d="M.6.600h18.800v15.400h-6.400L10 19l-3-3H.6z" /></svg>
      <div className="ml-[25px] h-[50px] w-px bg-[#8a7a60]" />
    </footer>
  );
}

export default function App() {
  return (
    <div className="flex h-[1080px] w-[1920px] flex-col overflow-hidden bg-[#e6e6e6] font-['Open_Sans',sans-serif]">
      <Header />
      <div className="flex h-[128px] border-b border-[#d2d2d2] bg-[#f1f1f1]">
        <Clipboard /><GroupSep /><FontGroup /><GroupSep /><Paragraph /><GroupSep /><Styles /><GroupSep /><Editing /><GroupSep />
        <svg className="ml-[41px] mt-[113px] h-[7px] w-[12px]" viewBox="0 0 12 7" fill="none" stroke="#666" strokeWidth="2"><path d="M1 6.500l5-5 5 5" /></svg>
      </div>
      <div className="flex h-[793px] overflow-hidden">
        <div className="flex w-[36px] shrink-0 flex-col">
          <div className="h-[35px] w-[36px] shrink-0 bg-[#d5d5d5] p-[3px]"><div className="flex h-[29px] w-[29px] items-end border border-[#eee] bg-[#fcfcfc] pb-[7px] pl-[10px]"><div className="h-[9px] w-[9px] border-b-[3px] border-l-[3px] border-[#777]" /></div></div>
          <VRuler />
        </div>
        <div className="flex w-[1864px] shrink-0 flex-col"><HRuler /><Page /></div>
        <div className="flex w-[18px] shrink-0 flex-col pt-[2px]">
          <div className="flex h-[18px] items-center justify-center border border-[#c2c2c2] bg-white"><svg className="h-[5px] w-[9px]" viewBox="0 0 9 5"><path d="M0 5h9L4.500 0z" fill="#666" /></svg></div>
          <div className="mt-[32px] h-[392px] border border-[#c2c2c2] bg-white" />
          <div className="mt-auto mb-[2px] flex h-[19px] items-center justify-center border border-[#c2c2c2] bg-white"><svg className="h-[5px] w-[9px]" viewBox="0 0 9 5"><path d="M0 0h9L4.500 5z" fill="#666" /></svg></div>
        </div>
      </div>
      <StatusBar />
      <Taskbar />
    </div>
  );
}
